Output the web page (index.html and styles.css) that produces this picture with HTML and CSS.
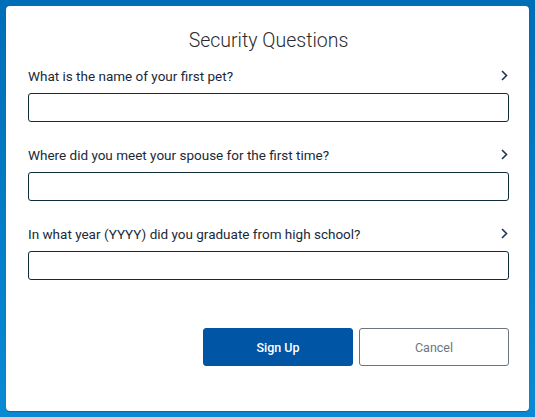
FILE: index.html
```html
<!DOCTYPE html>
<html>
<head>
<meta charset="utf-8">
<link rel="stylesheet" href="styles.css">
</head>
<body>
<div class="panel">
  <h1 class="title">Security Questions</h1>
  <div class="question">
    <div class="label-row">
      <span class="label">What is the name of your first pet?</span>
      <svg class="chev" width="7" height="11" viewBox="0 0 7 11"><path d="M1 1 L5.5 5.5 L1 10" fill="none" stroke="#1d3553" stroke-width="1.6"/></svg>
    </div>
    <input class="field" type="text">
  </div>
  <div class="question">
    <div class="label-row">
      <span class="label">Where did you meet your spouse for the first time?</span>
      <svg class="chev" width="7" height="11" viewBox="0 0 7 11"><path d="M1 1 L5.5 5.5 L1 10" fill="none" stroke="#1d3553" stroke-width="1.6"/></svg>
    </div>
    <input class="field" type="text">
  </div>
  <div class="question">
    <div class="label-row">
      <span class="label">In what year (YYYY) did you graduate from high school?</span>
      <svg class="chev" width="7" height="11" viewBox="0 0 7 11"><path d="M1 1 L5.5 5.5 L1 10" fill="none" stroke="#1d3553" stroke-width="1.6"/></svg>
    </div>
    <input class="field" type="text">
  </div>
  <div class="actions">
    <button class="btn primary">Sign Up</button>
    <button class="btn secondary">Cancel</button>
  </div>
</div>
</body>
</html>
```
FILE: styles.css
```css
html, body {
  margin: 0;
  padding: 0;
  height: 100%;
}
body {
  background: linear-gradient(to bottom, #006db7 0%, #0a8ad5 100%);
  font-family: Roboto, "Liberation Sans", sans-serif;
  padding: 6px;
  box-sizing: border-box;
}
.panel {
  background: #fff;
  border-radius: 4px;
  height: 405px;
  box-sizing: border-box;
  padding: 23px 20px 0 22px;
  box-shadow: 0 1px 1px rgba(0,0,0,0.25);
}
.title {
  margin: 0;
  font-size: 19.5px;
  line-height: 24px;
  font-weight: 300;
  color: #2b2b2b;
  text-align: center;
  margin-bottom: 13px;
}
.question {
  margin-bottom: 23px;
}
.label-row {
  display: flex;
  justify-content: space-between;
  align-items: center;
  height: 20px;
  margin-bottom: 7px;
}
.label {
  font-size: 13.5px;
  line-height: 20px;
  color: #1b2a38;
}
.chev {
  display: block;
  margin-right: 1px;
  margin-top: -1px;
}
.field {
  display: block;
  width: 100%;
  height: 29px;
  box-sizing: border-box;
  border: 1px solid #0f2c3f;
  border-radius: 3px;
  margin: 0;
  padding: 0 8px;
  font-family: inherit;
  background: #fff;
}
.actions {
  display: flex;
  justify-content: flex-end;
  gap: 6px;
  margin-top: 48px;
}
.btn {
  width: 150px;
  height: 38px;
  border-radius: 3px;
  font-family: inherit;
  font-size: 12.5px;
  margin: 0;
  cursor: pointer;
}
.primary {
  background: #0055a5;
  border: 1px solid #0055a5;
  color: #fff;
  font-weight: 500;
}
.secondary {
  background: #fff;
  border: 1px solid #6c757d;
  color: #6c757d;
  font-weight: 400;
}
```
